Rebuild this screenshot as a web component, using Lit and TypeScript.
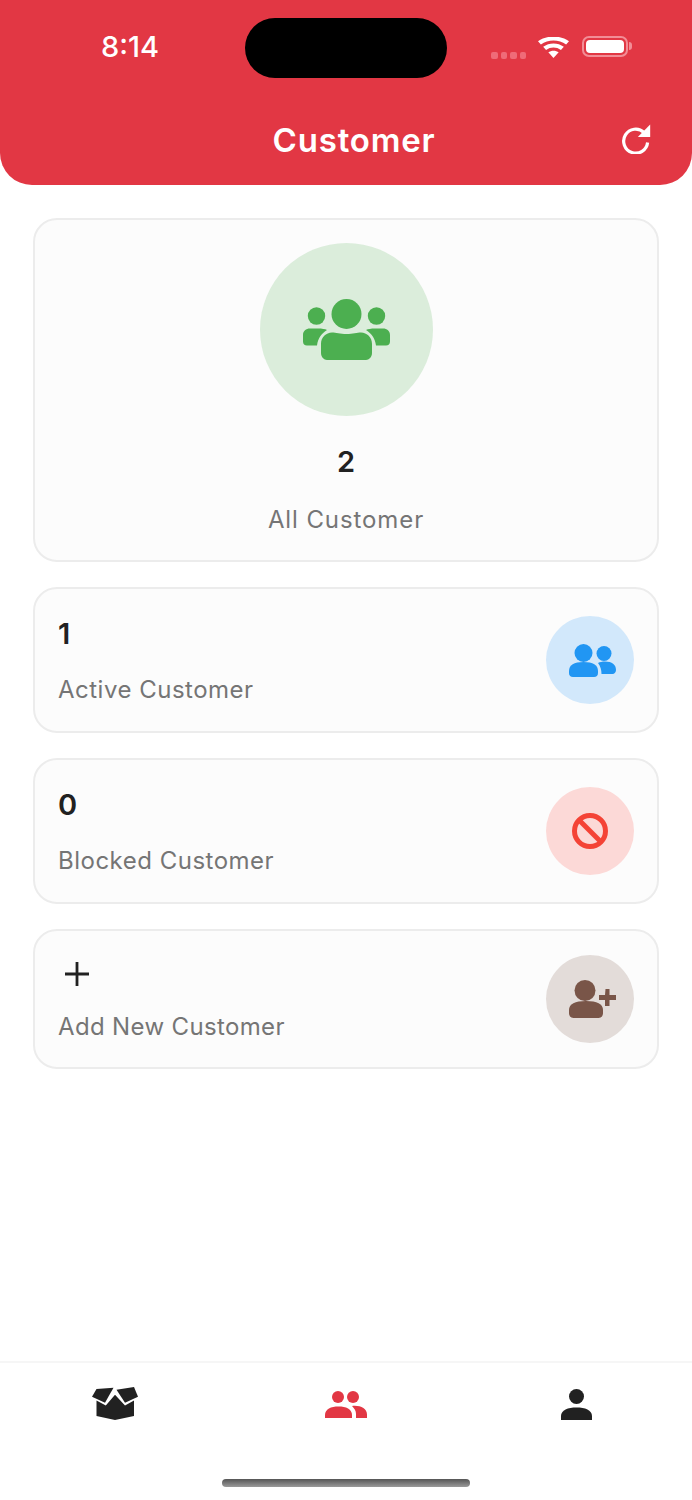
import { LitElement, html, css } from "lit";
import { customElement } from "lit/decorators.js";

const groupsIcon = html`<svg class="i-groups" viewBox="0 0 87 61" fill="#4caf50">
  <circle cx="43.500" cy="15" r="15"/><circle cx="13.500" cy="17" r="8.700"/><circle cx="73.500" cy="17" r="8.700"/>
  <path d="M18 45c0-7 5-11 11-11.500 4 0 8 1.500 14.500 1.500s10.500-1.500 14.500-1.500c6 .5 11 4.500 11 11.500v9c0 4-3 7-6 7H24c-3 0-6-3-6-7z"/>
  <path d="M0 36c0-4 3-6.500 7-6.500h8c4 0 7 .5 9 1.500-5 3-9 8-10 15.500H4c-2.500 0-4-1.500-4-4z"/>
  <path d="M87 36c0-4-3-6.500-7-6.500h-8c-4 0-7 .5-9 1.500 5 3 9 8 10 15.500H83c2.500 0 4-1.500 4-4z"/>
</svg>`;

const peopleIcon = html`<svg class="i-people" viewBox="0 0 47 33" fill="#2196f3">
  <circle cx="14.500" cy="9" r="9"/><circle cx="35" cy="9.500" r="7.500"/>
  <path d="M0 27c0-6 5-9 14.500-9S29 21 29 27v2c0 2.500-1.500 4-4 4H4c-2.500 0-4-1.500-4-4z"/>
  <path d="M29 19c2-1 4-1.500 7-1.500 7 0 11 3 11 8.500 0 2-1.500 4-3.500 4H32.500c0-4-1-8-3.500-11z"/>
</svg>`;

const banIcon = html`<svg class="i-ban" viewBox="0 0 36 36" fill="none" stroke="#f44336" stroke-width="5">
  <circle cx="18" cy="18" r="15.500"/><path d="M7 7l22 22"/>
</svg>`;

const addIcon = html`<svg class="i-add" viewBox="0 0 47 38" fill="#795548">
  <circle cx="16" cy="10.500" r="10.500"/>
  <path d="M0 30c0-6 6-9 17-9s17 3 17 9v3c0 3-2 5-4.500 5H4.500C2 38 0 36 0 33z"/>
  <path d="M36.500 9h4v6h6.500v5h-6.500v6h-4.500v-6h-6v-5h6z"/>
</svg>`;

const plusIcon = html`<svg class="i-plus" viewBox="0 0 24 24" fill="none" stroke="#212121" stroke-width="2.800">
  <path d="M0 12h24M12 0v24"/>
</svg>`;

const boxIcon = html`<svg class="i-box" viewBox="0 0 46 33" fill="#212121">
  <path d="M0 9.800L4.500 2l17-1.200L13 15.800z"/>
  <path d="M46 9.800L42 0 24.500 2.800l8.500 13z"/>
  <path d="M4.500 13.500L13.800 18.500 23 7.800 33 18.500 42 13.500v15.500L23 33 4.500 29z"/>
</svg>`;

const navPeople = html`<svg class="i-nav-people" viewBox="0 0 42 27" fill="#e23744">
  <circle cx="13" cy="6" r="6"/><circle cx="28" cy="6" r="6"/>
  <path d="M0 27v-3c0-6 6-8.500 13.500-8.500S27 18 27 24v3z"/>
  <path d="M27 15c8-1 15 2.500 15 8.500V27H31v-4c0-3-1.500-5.500-4-8z"/>
</svg>`;

const navPerson = html`<svg class="i-nav-person" viewBox="0 0 31 31" fill="#212121">
  <circle cx="15.500" cy="7.500" r="7.500"/>
  <path d="M0 31v-4c0-6 7-8.500 15.500-8.500S31 21 31 27v4z"/>
</svg>`;

const refreshIcon = html`<svg class="i-refresh" viewBox="0 0 30 30" fill="none">
  <path d="M23 8.500A12 12 0 1 0 26.600 18.500" stroke="#fff" stroke-width="3.200"/>
  <path d="M29.200 0.500v12.500H16.800z" fill="#fff"/>
</svg>`;

const wifiIcon = html`<svg class="i-wifi" viewBox="0 0 30 23" preserveAspectRatio="none" fill="#fff">
  <path d="M15 23l-5-6.200c2.800-2.400 7.200-2.400 10 0z"/>
  <path d="M7.800 14.300L5 10.800c5.800-5 14.200-5 20 0l-2.800 3.500c-4.300-3.600-10.100-3.600-14.400 0z"/>
  <path d="M2.800 8.100L0 4.700c8.600-7 21.400-7 30 0l-2.800 3.400C20.200 2.500 9.800 2.500 2.800 8.100z"/>
</svg>`;

@customElement("app-root")
export class AppRoot extends LitElement {
  static styles = css`
    :host {
      display: flex;
      flex-direction: column;
      height: 1500px;
      background: #fff;
      font-family: "Inter", "Liberation Sans", sans-serif;
      color: #212121;
    }
    .header {
      background: #e23744;
      height: 185px;
      border-radius: 0 0 32px 32px;
      display: flex;
      flex-direction: column;
      flex: none;
    }
    .status {
      position: relative;
      height: 78px;
      flex: none;
    }
    .time {
      position: absolute;
      left: 101px;
      top: 29px;
      font-size: 29px;
      line-height: 36px;
      font-weight: 500;
      color: #fff;
    }
    .island {
      position: absolute;
      left: 245px;
      top: 18px;
      width: 202px;
      height: 60px;
      border-radius: 30px;
      background: #000;
    }
    .status-right {
      position: absolute;
      left: 491px;
      top: 35px;
      display: flex;
      align-items: flex-start;
    }
    .dots {
      display: flex;
      gap: 3px;
      margin-top: 17px;
    }
    .dot {
      width: 6.500px;
      height: 6.500px;
      border-radius: 2px;
      background: #ef6b78;
    }
    .i-wifi {
      width: 31px;
      height: 21px;
      margin-left: 12px;
      margin-top: 2px;
    }
    .battery {
      margin-left: 13px;
      width: 46px;
      height: 21px;
      box-sizing: border-box;
      border: 2px solid #f28d96;
      border-radius: 7px;
      padding: 2px;
      margin-top: 1px;
    }
    .battery div {
      width: 100%;
      height: 100%;
      background: #fff;
      border-radius: 4px;
    }
    .nub {
      width: 3px;
      height: 8px;
      margin-top: 7px;
      margin-left: 1px;
      background: #f28d96;
      border-radius: 0 3px 3px 0;
    }
    .titlebar {
      display: flex;
      align-items: center;
      justify-content: center;
      position: relative;
      height: 44px;
      margin-top: 40px;
    }
    .title {
      color: #fff;
      font-size: 33px;
      font-weight: 600;
      letter-spacing: 0.8px;
      line-height: 44px;
      margin-left: 16px;
    }
    .i-refresh {
      position: absolute;
      left: 621px;
      top: 6px;
      width: 30px;
      height: 30px;
    }
    .main {
      flex: 1;
      padding: 33px 33px 0;
      display: flex;
      flex-direction: column;
      gap: 25px;
    }
    .card {
      box-sizing: border-box;
      background: #fcfcfc;
      border: 2px solid #ececec;
      border-radius: 24px;
    }
    .card.all {
      height: 344px;
      display: flex;
      flex-direction: column;
      align-items: center;
      padding-top: 23px;
    }
    .card.row {
      height: 146px;
      display: flex;
      align-items: center;
      justify-content: space-between;
      padding: 0 23px;
    }
    .card.row.add {
      height: 140px;
    }
    .circle {
      flex: none;
      width: 88px;
      height: 88px;
      border-radius: 50%;
      display: flex;
      align-items: center;
      justify-content: center;
    }
    .circle.big {
      width: 173px;
      height: 173px;
      background: #dbeddb;
    }
    .blue { background: #d2e8fb; }
    .red { background: #fcd9d7; }
    .brown { background: #e3dcd9; }
    .num {
      font-size: 29px;
      font-weight: 600;
      line-height: 40px;
      color: #212121;
    }
    .all .num {
      margin-top: 26px;
    }
    .label {
      font-size: 24px;
      line-height: 36px;
      color: #757575;
      letter-spacing: 0.5px;
    }
    .all .label {
      margin-top: 20px;
      letter-spacing: 0.9px;
    }
    .text {
      display: flex;
      flex-direction: column;
      gap: 18px;
      padding-top: 2px;
    }
    .add .text {
      gap: 23px;
      padding-top: 0;
    }
    .add .label {
      letter-spacing: 0.35px;
    }
    .i-groups { width: 87px; height: 61px; }
    .i-people { width: 47px; height: 33px; margin-left: 4px; }
    .i-ban { width: 36px; height: 36px; }
    .i-add { width: 47px; height: 38px; margin-left: 4px; }
    .i-plus { width: 24px; height: 24px; margin: 8px 0 0 7px; display: block; }
    .nav {
      flex: none;
      height: 139px;
      box-sizing: border-box;
      border-top: 2px solid #f6f6f6;
      display: flex;
      flex-direction: column;
      align-items: center;
    }
    .tabs {
      display: grid;
      grid-template-columns: repeat(3, 1fr);
      width: 692px;
      height: 116px;
      flex: none;
    }
    .tab {
      display: flex;
      justify-content: center;
      align-items: flex-start;
    }
    .i-box { width: 46px; height: 33px; margin-top: 24px; }
    .i-nav-people { width: 42px; height: 27px; margin-top: 28px; }
    .i-nav-person { width: 31px; height: 31px; margin-top: 26px; }
    .home {
      width: 248px;
      height: 8px;
      border-radius: 4px;
      background: linear-gradient(#555, #9a9a9a);
    }
  `;

  render() {
    return html`
      <header class="header">
        <div class="status">
          <span class="time">8:14</span>
          <div class="island"></div>
          <div class="status-right">
            <div class="dots">
              <span class="dot"></span><span class="dot"></span><span class="dot"></span><span class="dot"></span>
            </div>
            ${wifiIcon}
            <div class="battery"><div></div></div>
            <div class="nub"></div>
          </div>
        </div>
        <div class="titlebar">
          <span class="title">Customer</span>
          ${refreshIcon}
        </div>
      </header>
      <main class="main">
        <section class="card all">
          <div class="circle big">${groupsIcon}</div>
          <div class="num">2</div>
          <div class="label">All Customer</div>
        </section>
        <section class="card row">
          <div class="text"><div class="num">1</div><div class="label">Active Customer</div></div>
          <div class="circle blue">${peopleIcon}</div>
        </section>
        <section class="card row">
          <div class="text"><div class="num">0</div><div class="label">Blocked Customer</div></div>
          <div class="circle red">${banIcon}</div>
        </section>
        <section class="card row add">
          <div class="text">${plusIcon}<div class="label">Add New Customer</div></div>
          <div class="circle brown">${addIcon}</div>
        </section>
      </main>
      <nav class="nav">
        <div class="tabs">
          <div class="tab">${boxIcon}</div>
          <div class="tab">${navPeople}</div>
          <div class="tab">${navPerson}</div>
        </div>
        <div class="home"></div>
      </nav>
    `;
  }
}
